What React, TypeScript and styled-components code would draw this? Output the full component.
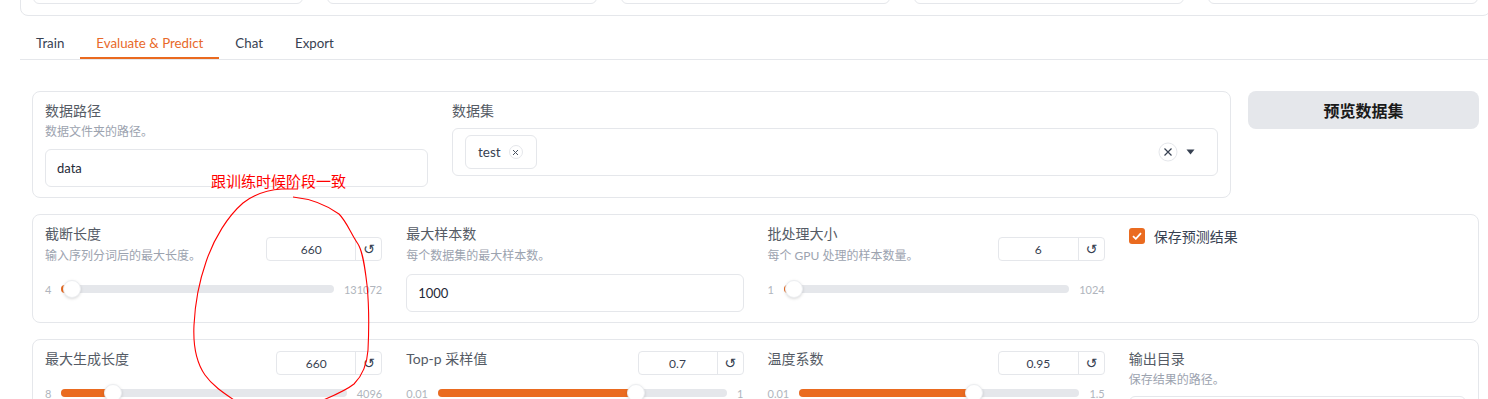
import React from 'react'
import styled, { createGlobalStyle } from 'styled-components'

const GlobalStyle = createGlobalStyle`
  html, body {
    margin: 0;
    padding: 0;
    background: #ffffff;
    overflow: hidden;
  }
  body {
    font-family: Lato, 'Noto Sans CJK SC', sans-serif;
    color: #374151;
  }
  * {
    box-sizing: border-box;
  }
`

const Root = styled.div`
  position: relative;
  width: 1488px;
  height: 399px;
  overflow: hidden;
`

const Page = styled.div`
  width: 1471px;
  margin-left: 20px;
`

const TopPanel = styled.div`
  margin-top: -47px;
  border: 1px solid #e5e7eb;
  border-radius: 8px;
  padding: 12px 12px 11px;
  display: grid;
  grid-template-columns: repeat(5, 1fr);
  gap: 24px;
`

const Box = styled.div`
  height: 38px;
  border: 1px solid #e5e7eb;
  border-radius: 6px;
`

const TabNav = styled.div`
  margin-top: 12px;
  display: flex;
  border-bottom: 1px solid #e5e7eb;
`

const TabButton = styled.button<{ $active?: boolean }>`
  height: 31px;
  padding: 0 16px;
  border: 0;
  background: none;
  font-family: Lato, 'Noto Sans CJK SC', sans-serif;
  font-size: 13.3px;
  color: ${(p) => (p.$active ? '#e8692a' : '#374151')};
  border-bottom: 2px solid ${(p) => (p.$active ? '#ea6a1f' : 'transparent')};
`

const TabBody = styled.div`
  padding: 31px 12px 0;
  display: flex;
  flex-direction: column;
  gap: 16px;
`

const TopRow = styled.div`
  display: grid;
  grid-template-columns: 1fr 231px;
  gap: 17px;
  align-items: start;
`

const Panel = styled.div`
  border: 1px solid #e5e7eb;
  border-radius: 8px;
  padding: 10px 12px;
`

const DataGrid = styled.div`
  display: grid;
  grid-template-columns: 1fr 2fr;
  gap: 24px;
`

const ParamGrid = styled.div`
  display: grid;
  grid-template-columns: repeat(4, 1fr);
  gap: 24px;
`

const Field = styled.div`
  display: flex;
  flex-direction: column;
  min-width: 0;
`

const Label = styled.div`
  font-size: 14px;
  line-height: 18px;
  color: #555b65;
  white-space: nowrap;
`

const Info = styled.div<{ $gap?: number }>`
  margin-top: ${(p) => p.$gap ?? 5}px;
  font-size: 12px;
  line-height: 16px;
  color: #9ca3af;
  white-space: nowrap;
`

const TextInput = styled.div<{ $gap?: number }>`
  margin-top: ${(p) => p.$gap ?? 9}px;
  height: 38px;
  border: 1px solid #e5e7eb;
  border-radius: 6px;
  padding: 0 11px;
  display: flex;
  align-items: center;
  font-size: 13px;
  color: #1f2937;
`

const Dropdown = styled.div`
  margin-top: 8px;
  height: 48px;
  border: 1px solid #e5e7eb;
  border-radius: 6px;
  padding: 0 22px 0 12px;
  display: flex;
  align-items: center;
  gap: 8px;
`

const Tag = styled.div`
  height: 34px;
  border: 1px solid #e5e7eb;
  border-radius: 6px;
  padding: 0 13px 0 12px;
  display: flex;
  align-items: center;
  gap: 8px;
  font-size: 13.5px;
  color: #374151;
`

const TagRemove = styled.span`
  width: 14px;
  height: 14px;
  border: 1px solid #e5e7eb;
  border-radius: 50%;
  display: flex;
  align-items: center;
  justify-content: center;
`

const Spacer = styled.div`
  flex: 1;
`

const PreviewButton = styled.button`
  height: 38px;
  border: 0;
  border-radius: 8px;
  background: #e5e7eb;
  font-family: Lato, 'Noto Sans CJK SC', sans-serif;
  font-size: 16px;
  font-weight: 700;
  color: #1a1a1a;
`

const FieldHeader = styled.div`
  display: flex;
  justify-content: space-between;
  align-items: flex-start;
  gap: 12px;
`

const NumberBox = styled.div<{ $width: number; $offset: number }>`
  flex: none;
  width: ${(p) => p.$width}px;
  height: 24px;
  margin-top: ${(p) => p.$offset}px;
  border: 1px solid #e5e7eb;
  border-radius: 4px;
  display: flex;
  align-items: stretch;
`

const NumberValue = styled.div`
  flex: 1;
  display: flex;
  align-items: center;
  justify-content: center;
  font-size: 12px;
  color: #374151;
`

const ResetButton = styled.div`
  width: 26px;
  border-left: 1px solid #e5e7eb;
  display: flex;
  align-items: center;
  justify-content: center;
  font-family: 'DejaVu Sans', sans-serif;
  font-size: 14px;
  color: #374151;
`

const SliderRow = styled.div<{ $gap: number }>`
  margin-top: ${(p) => p.$gap}px;
  height: 18px;
  display: flex;
  align-items: center;
  gap: 10px;
`

const RangeText = styled.span`
  font-size: 11px;
  color: #b0b5bd;
  white-space: nowrap;
`

const Track = styled.div`
  position: relative;
  flex: 1;
  height: 8px;
  border-radius: 4px;
  background: #e5e7eb;
`

const Fill = styled.div`
  position: absolute;
  left: 0;
  top: 0;
  bottom: 0;
  border-radius: 4px;
  background: #ea6b20;
`

const Thumb = styled.div`
  position: absolute;
  top: 50%;
  width: 18px;
  height: 18px;
  border-radius: 50%;
  background: #ffffff;
  border: 1px solid #eceef1;
  box-shadow: 0 1px 3px rgba(0, 0, 0, 0.15);
  transform: translate(-50%, -50%);
`

const CheckRow = styled.div`
  height: 22px;
  display: flex;
  align-items: center;
  gap: 9px;
  font-size: 14px;
  color: #374151;
`

const CheckMark = styled.span`
  width: 16px;
  height: 16px;
  border-radius: 3px;
  background: #ea6b20;
  display: flex;
  align-items: center;
  justify-content: center;
`

const Overlay = styled.div`
  position: absolute;
  inset: 0;
  pointer-events: none;
`

const Note = styled.div`
  position: absolute;
  left: 211px;
  top: 173px;
  font-family: 'Noto Sans CJK SC', sans-serif;
  font-size: 15px;
  line-height: 16px;
  color: #ff0000;
  white-space: nowrap;
`

const Scribble = styled.svg`
  position: absolute;
  left: 0;
  top: 0;
`

type SliderProps = {
  label: string
  info?: string
  value: number
  min: number
  max: number
  numWidth: number
}

const SliderField = ({ label, info, value, min, max, numWidth }: SliderProps) => {
  const pct = (value - min) / (max - min)
  const pos = `calc(${pct} * (100% - 18px) + 9px)`
  return (
    <Field>
      <FieldHeader>
        <div>
          <Label>{label}</Label>
          {info && <Info>{info}</Info>}
        </div>
        <NumberBox $width={numWidth} $offset={info ? 12 : 1}>
          <NumberValue>{value}</NumberValue>
          <ResetButton>↺</ResetButton>
        </NumberBox>
      </FieldHeader>
      <SliderRow $gap={info ? 16 : 9}>
        <RangeText>{min}</RangeText>
        <Track>
          <Fill style={{ width: pos }} />
          <Thumb style={{ left: pos }} />
        </Track>
        <RangeText>{max}</RangeText>
      </SliderRow>
    </Field>
  )
}

const App = () => {
  return (
    <Root>
      <GlobalStyle />
      <Page>
        <TopPanel>
          <Box />
          <Box />
          <Box />
          <Box />
          <Box />
        </TopPanel>
        <TabNav>
          <TabButton>Train</TabButton>
          <TabButton $active>Evaluate &amp; Predict</TabButton>
          <TabButton>Chat</TabButton>
          <TabButton>Export</TabButton>
        </TabNav>
        <TabBody>
          <TopRow>
            <Panel>
              <DataGrid>
                <Field>
                  <Label>数据路径</Label>
                  <Info $gap={4}>数据文件夹的路径。</Info>
                  <TextInput>data</TextInput>
                </Field>
                <Field>
                  <Label>数据集</Label>
                  <Dropdown>
                    <Tag>
                      test
                      <TagRemove>
                        <svg width="7" height="7" viewBox="0 0 7 7">
                          <path d="M1 1L6 6M6 1L1 6" stroke="#4b5563" strokeWidth="1" />
                        </svg>
                      </TagRemove>
                    </Tag>
                    <Spacer />
                    <svg width="20" height="20" viewBox="0 0 20 20">
                      <circle cx="10" cy="10" r="9" fill="none" stroke="#e5e7eb" />
                      <path d="M6.5 6.5L13.5 13.5M13.5 6.5L6.5 13.5" stroke="#374151" strokeWidth="1.2" />
                    </svg>
                    <svg width="9" height="6" viewBox="0 0 9 6">
                      <path d="M0.5 0.5H8.5L4.5 5.5Z" fill="#374151" />
                    </svg>
                  </Dropdown>
                </Field>
              </DataGrid>
            </Panel>
            <PreviewButton>预览数据集</PreviewButton>
          </TopRow>

          <Panel>
            <ParamGrid>
              <SliderField label="截断长度" info="输入序列分词后的最大长度。" value={660} min={4} max={131072} numWidth={116} />
              <Field>
                <Label>最大样本数</Label>
                <Info>每个数据集的最大样本数。</Info>
                <TextInput $gap={10}>1000</TextInput>
              </Field>
              <SliderField label="批处理大小" info="每个 GPU 处理的样本数量。" value={6} min={1} max={1024} numWidth={107} />
              <Field>
                <CheckRow>
                  <CheckMark>
                    <svg width="10" height="8" viewBox="0 0 10 8">
                      <path d="M1 4.2L3.8 6.8L9 1.2" fill="none" stroke="#ffffff" strokeWidth="1.8" />
                    </svg>
                  </CheckMark>
                  保存预测结果
                </CheckRow>
              </Field>
            </ParamGrid>
          </Panel>

          <Panel>
            <ParamGrid>
              <SliderField label="最大生成长度" value={660} min={8} max={4096} numWidth={106} />
              <SliderField label="Top-p 采样值" value={0.7} min={0.01} max={1} numWidth={106} />
              <SliderField label="温度系数" value={0.95} min={0.01} max={1.5} numWidth={107} />
              <Field>
                <Label>输出目录</Label>
                <Info $gap={4}>保存结果的路径。</Info>
                <TextInput $gap={8} />
              </Field>
            </ParamGrid>
          </Panel>
        </TabBody>
      </Page>

      <Overlay>
        <Note>跟训练时候阶段一致</Note>
        <Scribble width="1488" height="399" viewBox="0 0 1488 399">
          <g fill="none" stroke="#ff0000" strokeWidth="1.1">
            <path d="M298 189 L282 189 C 268 190 253 195 243 203 C 228 216 214 238 206 262 C 199 282 195 304 194 325 C 193 345 196 362 205 375 C 212 385 222 392 237 402" />
            <path d="M293 197 C 312 199 328 206 339 214 C 347 222 351 234 358 244 C 363 252 365 268 367 285 C 369 305 369 330 368 350 C 367 365 363 375 354 384 C 344 392 330 397 314 404" />
          </g>
        </Scribble>
      </Overlay>
    </Root>
  )
}

export default App
